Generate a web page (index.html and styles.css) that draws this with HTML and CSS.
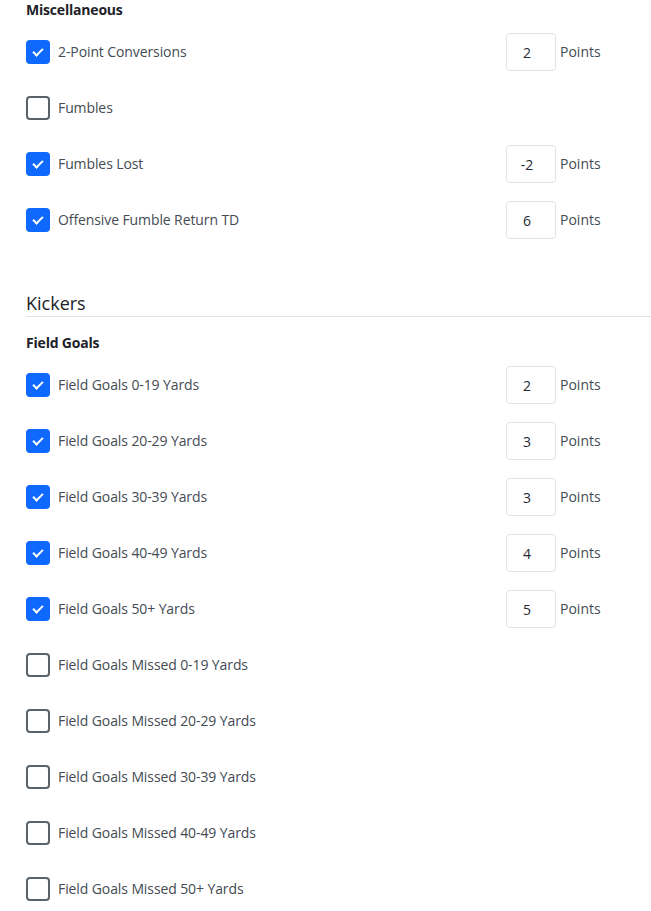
FILE: index.html
```html
<!DOCTYPE html>
<html lang="en">
<head>
    <meta charset="UTF-8">
    <meta name="viewport" content="width=device-width, initial-scale=1.0">
    <title>Scoring Settings</title>
    <link rel="stylesheet" href="styles.css">
</head>
<body>
    <div class="settings">
        <section class="group">
            <h3 class="group-title">Miscellaneous</h3>
            <div class="row">
                <label class="stat"><input type="checkbox" checked><span class="box"></span>2-Point Conversions</label>
                <div class="points"><input type="text" value="2"><span>Points</span></div>
            </div>
            <div class="row">
                <label class="stat"><input type="checkbox"><span class="box"></span>Fumbles</label>
            </div>
            <div class="row">
                <label class="stat"><input type="checkbox" checked><span class="box"></span>Fumbles Lost</label>
                <div class="points"><input type="text" value="-2"><span>Points</span></div>
            </div>
            <div class="row">
                <label class="stat"><input type="checkbox" checked><span class="box"></span>Offensive Fumble Return TD</label>
                <div class="points"><input type="text" value="6"><span>Points</span></div>
            </div>
        </section>

        <h2 class="section-title">Kickers</h2>

        <section class="group">
            <h3 class="group-title">Field Goals</h3>
            <div class="row">
                <label class="stat"><input type="checkbox" checked><span class="box"></span>Field Goals 0-19 Yards</label>
                <div class="points"><input type="text" value="2"><span>Points</span></div>
            </div>
            <div class="row">
                <label class="stat"><input type="checkbox" checked><span class="box"></span>Field Goals 20-29 Yards</label>
                <div class="points"><input type="text" value="3"><span>Points</span></div>
            </div>
            <div class="row">
                <label class="stat"><input type="checkbox" checked><span class="box"></span>Field Goals 30-39 Yards</label>
                <div class="points"><input type="text" value="3"><span>Points</span></div>
            </div>
            <div class="row">
                <label class="stat"><input type="checkbox" checked><span class="box"></span>Field Goals 40-49 Yards</label>
                <div class="points"><input type="text" value="4"><span>Points</span></div>
            </div>
            <div class="row">
                <label class="stat"><input type="checkbox" checked><span class="box"></span>Field Goals 50+ Yards</label>
                <div class="points"><input type="text" value="5"><span>Points</span></div>
            </div>
            <div class="row">
                <label class="stat"><input type="checkbox"><span class="box"></span>Field Goals Missed 0-19 Yards</label>
            </div>
            <div class="row">
                <label class="stat"><input type="checkbox"><span class="box"></span>Field Goals Missed 20-29 Yards</label>
            </div>
            <div class="row">
                <label class="stat"><input type="checkbox"><span class="box"></span>Field Goals Missed 30-39 Yards</label>
            </div>
            <div class="row">
                <label class="stat"><input type="checkbox"><span class="box"></span>Field Goals Missed 40-49 Yards</label>
            </div>
            <div class="row">
                <label class="stat"><input type="checkbox"><span class="box"></span>Field Goals Missed 50+ Yards</label>
            </div>
        </section>
    </div>
</body>
</html>
```

FILE: styles.css
```css
body {
    font-family: "Open Sans", Arial, sans-serif;
    background-color: #fff;
    color: #1d2228;
    margin: 0;
}
.settings {
    padding: 0 0 0 26px;
}
.group-title {
    font-size: 14px;
    line-height: 20px;
    font-weight: 700;
    margin: 0 0 4px;
    color: #1d2228;
    letter-spacing: -0.2px;
}
.section-title {
    font-size: 18px;
    line-height: 24px;
    font-weight: 400;
    margin: 43px 0 16px;
    padding-bottom: 1px;
    border-bottom: 1px solid #e0e4e9;
    color: #1d2228;
}
.row {
    display: flex;
    align-items: center;
    height: 56px;
}
.stat {
    display: flex;
    align-items: center;
    gap: 8px;
    font-size: 14px;
    line-height: 18px;
    padding-bottom: 1px;
    color: #444b53;
    letter-spacing: -0.1px;
    width: 480px;
    cursor: pointer;
}
.stat input {
    display: none;
}
.box {
    width: 24px;
    height: 24px;
    box-sizing: border-box;
    border: 2px solid #5b636a;
    border-radius: 4px;
    flex-shrink: 0;
    position: relative;
    margin-top: 1px;
}
.stat input:checked + .box {
    background-color: #0f69ff;
    border-color: #0f69ff;
}
.stat input:checked + .box::after {
    content: "";
    position: absolute;
    left: 7px;
    top: 4px;
    width: 4px;
    height: 8px;
    border: solid #fff;
    border-width: 0 2px 2px 0;
    transform: rotate(45deg);
}
.points {
    display: flex;
    align-items: center;
    gap: 4px;
    font-size: 14px;
    color: #444b53;
}
.points span {
    padding-bottom: 2px;
}
.points input {
    width: 50px;
    height: 38px;
    box-sizing: border-box;
    border: 1px solid #e0e4e9;
    border-radius: 4px;
    text-align: center;
    font-family: inherit;
    font-size: 14px;
    color: #232a31;
    padding: 0 8px 0 0;
}
```
